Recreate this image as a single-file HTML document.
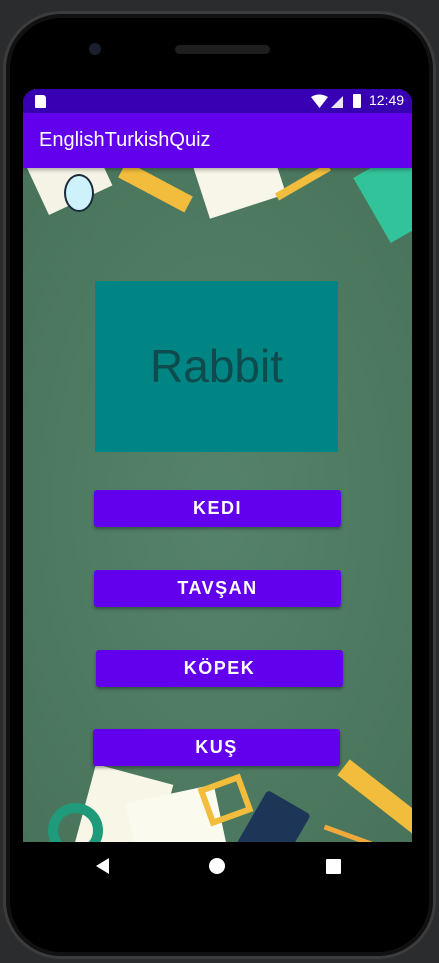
<!DOCTYPE html>
<html><head><meta charset="utf-8"><style>
*{margin:0;padding:0;box-sizing:border-box}
body{width:439px;height:963px;background:#2a2c2e;position:relative;overflow:hidden;font-family:"Liberation Sans",sans-serif}
.phone{position:absolute;left:3px;top:11px;width:433px;height:948px;background:#000;border-radius:58px;border:3px solid #3a3c3e;box-shadow:inset 0 0 0 4px #111}
.screen{position:absolute;left:23px;top:89px;width:389px;height:753px;overflow:hidden;border-radius:14px 14px 0 0;background:#4f7a5d}
.status{position:absolute;left:0;top:0;width:389px;height:24px;background:#3700b3;color:#fff;font-size:14px}
.appbar{position:absolute;left:0;top:24px;width:389px;height:55px;background:#6200ee;color:#fff;font-size:20px;line-height:55px;padding-left:16px;box-shadow:0 2px 4px rgba(0,0,0,.3)}
.content{position:absolute;left:0;top:79px;width:389px;height:674px;background:radial-gradient(ellipse at 50% 50%,#55836a,#48735a);overflow:hidden}
.card{position:absolute;left:72px;top:113px;width:243px;height:171px;background:#008585;color:#0f4b4c;font-size:46px;text-align:center;line-height:171px}
.btn{position:absolute;width:247px;height:37px;background:#6200ee;color:#fff;font-size:18px;font-weight:bold;letter-spacing:1.5px;text-align:center;line-height:37px;border-radius:3px;box-shadow:0 2px 3px rgba(0,0,0,.35)}
</style></head><body>
<div class="phone">
 <div style="position:absolute;left:83px;top:29px;width:12px;height:12px;border-radius:50%;background:#1a1f2e"></div>
 <div style="position:absolute;left:169px;top:31px;width:95px;height:9px;border-radius:5px;background:#1e1e1e"></div>
</div>
<div class="screen">
 <div class="content">
  <div style="position:absolute;left:10px;top:-25px;width:70px;height:60px;background:#f4f3e6;transform:rotate(-25deg)"></div>
  <div style="position:absolute;left:95px;top:10px;width:75px;height:18px;background:#f2bd3c;transform:rotate(28deg)"></div>
  <div style="position:absolute;left:175px;top:-25px;width:80px;height:65px;background:#f8f6e8;transform:rotate(-18deg)"></div>
  <div style="position:absolute;left:41px;top:6px;width:30px;height:38px;border-radius:50%;background:#cdf2fb;border:2px solid #1c2a3a"></div>
  <div style="position:absolute;left:345px;top:-10px;width:60px;height:75px;background:#32c39a;transform:rotate(-30deg)"></div>
  <div style="position:absolute;left:250px;top:10px;width:60px;height:8px;background:#f2bd3c;transform:rotate(-30deg)"></div>
  <div style="position:absolute;left:60px;top:605px;width:80px;height:90px;background:#f8f6e6;transform:rotate(15deg)"></div>
  <div style="position:absolute;left:110px;top:625px;width:90px;height:80px;background:#fbfaee;transform:rotate(-12deg)"></div>
  <div style="position:absolute;left:25px;top:635px;width:55px;height:55px;border-radius:50%;border:10px solid #1f9a7a;border-bottom-color:transparent"></div>
  <div style="position:absolute;left:180px;top:612px;width:45px;height:40px;border:6px solid #f2bd3c;transform:rotate(-20deg)"></div>
  <div style="position:absolute;left:225px;top:630px;width:50px;height:65px;background:#1d3557;border-radius:4px;transform:rotate(30deg)"></div>
  <div style="position:absolute;left:310px;top:620px;width:100px;height:20px;background:#f2bd3c;transform:rotate(38deg)"></div>
  <div style="position:absolute;left:300px;top:665px;width:50px;height:5px;background:#f2a93c;transform:rotate(20deg)"></div>
  <div class="card">Rabbit</div>
  <div class="btn" style="left:71px;top:322px">KEDI</div>
  <div class="btn" style="left:71px;top:402px">TAVŞAN</div>
  <div class="btn" style="left:73px;top:482px">KÖPEK</div>
  <div class="btn" style="left:70px;top:561px">KUŞ</div>
 </div>
 <div class="status">
  <div style="position:absolute;left:12px;top:6px;width:11px;height:13px;background:#fff;border-radius:1px 3px 1px 1px"></div>
  <svg style="position:absolute;left:288px;top:5px" width="40" height="15"><path d="M0 3 Q8 -2 17 3 L8.5 14Z" fill="#fff"/><path d="M20 14 L32 2 L32 14Z" fill="#fff" opacity=".9"/></svg>
  <div style="position:absolute;left:330px;top:5px;width:8px;height:14px;background:#fff;border-radius:1px"></div>
  <div style="position:absolute;left:346px;top:3px;font-size:14px">12:49</div>
 </div>
 <div class="appbar">EnglishTurkishQuiz</div>
</div>
<svg style="position:absolute;left:95px;top:857px" width="16" height="18"><path d="M14 1 L14 17 L1 9Z" fill="#fff"/></svg>
<div style="position:absolute;left:209px;top:858px;width:16px;height:16px;border-radius:50%;background:#fff"></div>
<div style="position:absolute;left:326px;top:859px;width:15px;height:15px;background:#fff;border-radius:1px"></div>
</body></html>
